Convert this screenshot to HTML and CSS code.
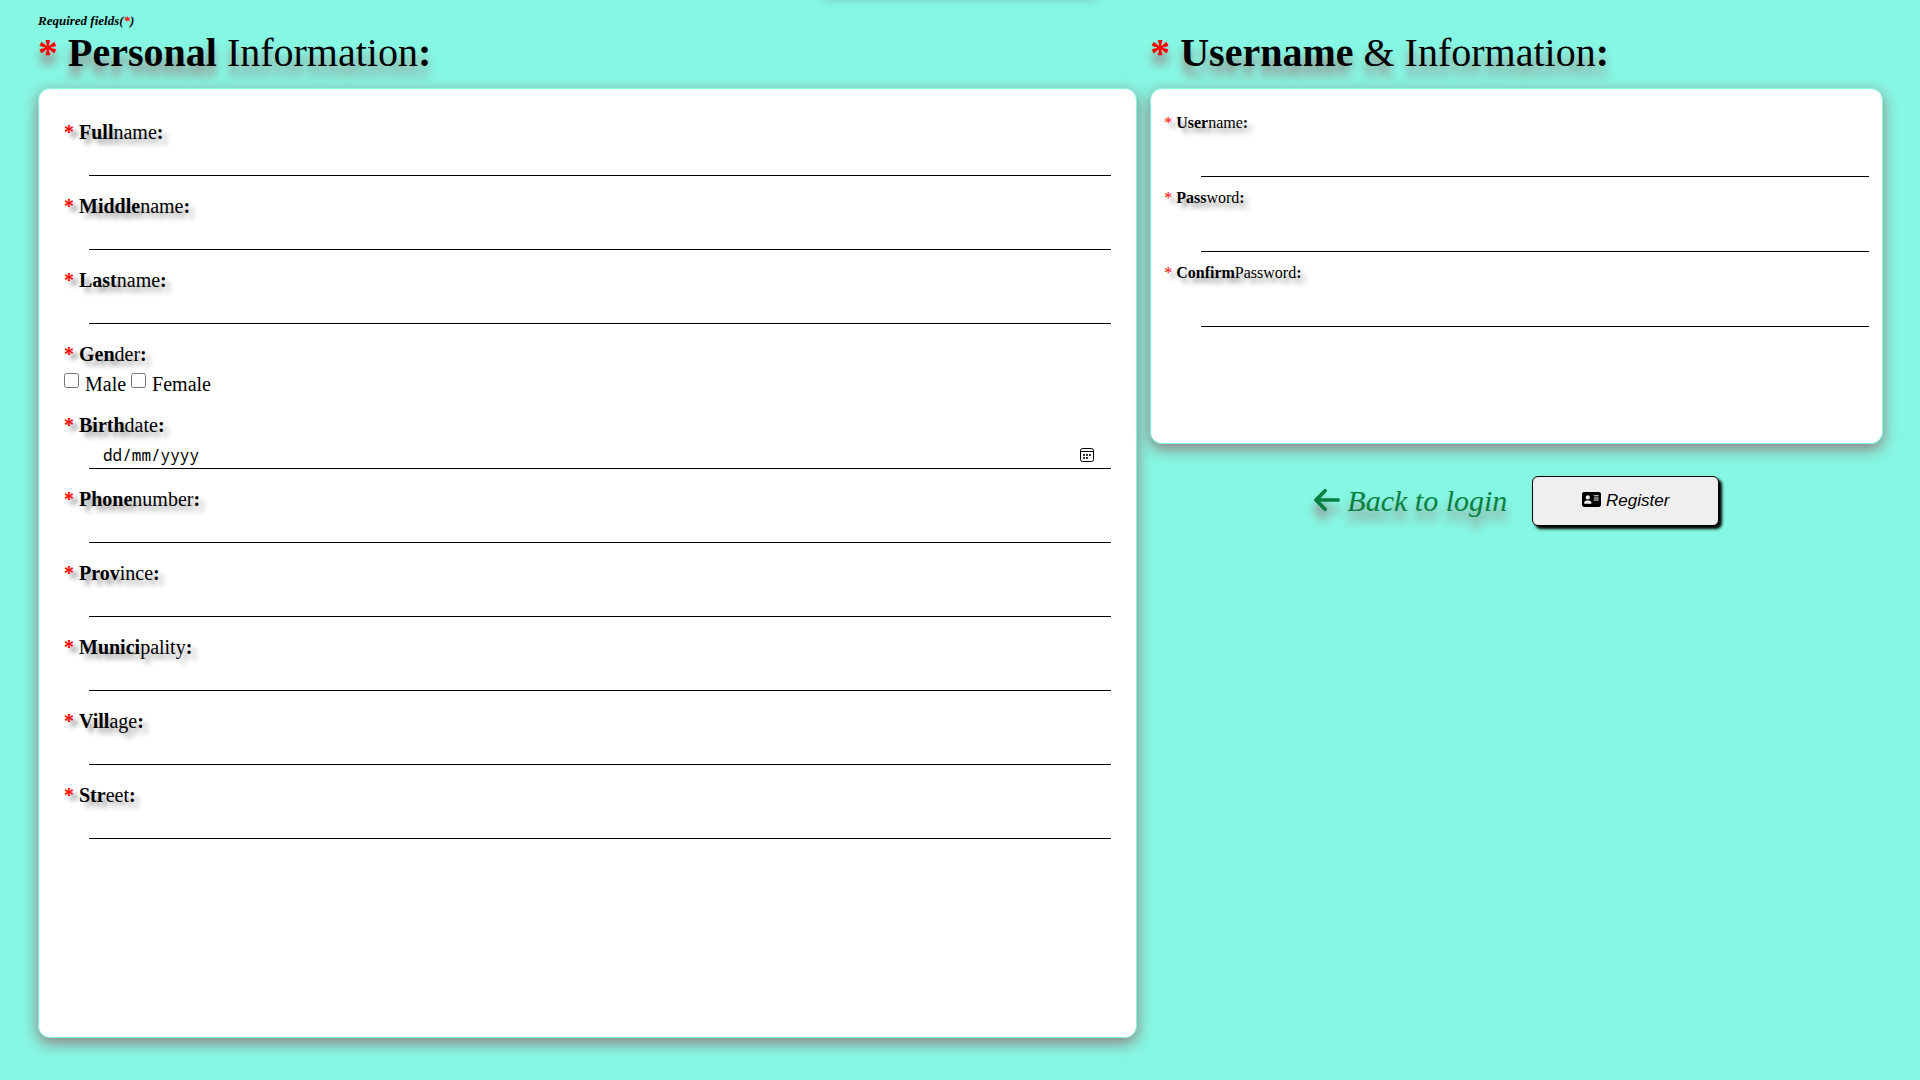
FILE: index.html
```
<!DOCTYPE html>
<html lang="en">
<head>
<meta charset="utf-8">
<title>Register</title>
<meta name="viewport" content="width=device-width, initial-scale=1">
<link rel="stylesheet" href="styles.css">
</head>
<body>
<div class="top-shade" aria-hidden="true"></div>
<form class="page">
  <p class="note">Required fields(<span class="star">*</span>)</p>
  <div class="columns">
    <section class="column">
      <h1 class="title"><b class="star">*</b> <b>Personal</b> Information<b>:</b></h1>
      <div class="card card-personal">
        <div class="field"><label for="fullname"><b class="star">*</b> <b>Full</b>name<b>:</b></label><input id="fullname" type="text"></div>
        <div class="field"><label for="middlename"><b class="star">*</b> <b>Middle</b>name<b>:</b></label><input id="middlename" type="text"></div>
        <div class="field"><label for="lastname"><b class="star">*</b> <b>Last</b>name<b>:</b></label><input id="lastname" type="text"></div>
        <fieldset class="field">
          <legend><b class="star">*</b> <b>Gen</b>der<b>:</b></legend>
          <div class="choices">
            <input id="male" type="checkbox"><label for="male">Male</label>
            <input id="female" type="checkbox"><label for="female">Female</label>
          </div>
        </fieldset>
        <div class="field">
          <label for="birthdate"><b class="star">*</b> <b>Birth</b>date<b>:</b></label>
          <div class="date">
            <input id="birthdate" type="text" placeholder="dd/mm/yyyy">
            <button type="button" class="picker" aria-label="Open calendar">
              <svg width="14" height="14" viewBox="0 0 14 14"><rect x=".5" y=".5" width="13" height="13" rx="2" fill="none" stroke="#000"/><path d="M0 3.5h14" stroke="#000"/><path d="M3 6h2v2H3zM6 6h2v2H6zM9 6h2v2H9zM3 9h2v2H3zM6 9h2v2H6z" fill="#333"/></svg>
            </button>
          </div>
        </div>
        <div class="field"><label for="phone"><b class="star">*</b> <b>Phone</b>number<b>:</b></label><input id="phone" type="tel"></div>
        <div class="field"><label for="province"><b class="star">*</b> <b>Prov</b>ince<b>:</b></label><input id="province" type="text"></div>
        <div class="field"><label for="municipality"><b class="star">*</b> <b>Munici</b>pality<b>:</b></label><input id="municipality" type="text"></div>
        <div class="field"><label for="village"><b class="star">*</b> <b>Vill</b>age<b>:</b></label><input id="village" type="text"></div>
        <div class="field"><label for="street"><b class="star">*</b> <b>Str</b>eet<b>:</b></label><input id="street" type="text"></div>
      </div>
    </section>
    <section class="column">
      <h1 class="title"><b class="star">*</b> <b>Username</b> &amp; Information<b>:</b></h1>
      <div class="card card-account">
        <div class="field"><label for="username"><span class="star">*</span> <b>User</b>name<b>:</b></label><input id="username" type="text"></div>
        <div class="field"><label for="password"><span class="star">*</span> <b>Pass</b>word<b>:</b></label><input id="password" type="password"></div>
        <div class="field"><label for="confirm"><span class="star">*</span> <b>Confirm</b>Password<b>:</b></label><input id="confirm" type="password"></div>
      </div>
      <div class="actions">
        <a class="back" href="#login"><svg class="arrow" viewBox="0 0 448 512" aria-hidden="true"><path fill="currentColor" d="M9.400 233.400c-12.500 12.500-12.500 32.800 0 45.300l160 160c12.500 12.500 32.800 12.500 45.300 0s12.500-32.800 0-45.300L109.200 288H416c17.700 0 32-14.300 32-32s-14.300-32-32-32H109.300L214.600 118.600c12.500-12.500 12.500-32.800 0-45.300s-32.800-12.500-45.300 0l-160 160z"/></svg> Back to login</a>
        <button class="register" type="submit"><svg class="id-card" viewBox="0 0 576 512" aria-hidden="true"><path fill="currentColor" d="M64 32C28.700 32 0 60.700 0 96v320c0 35.300 28.700 64 64 64h448c35.300 0 64-28.700 64-64V96c0-35.300-28.700-64-64-64H64zm80 256h64c44.200 0 80 35.800 80 80 0 8.800-7.200 16-16 16H80c-8.800 0-16-7.200-16-16 0-44.200 35.800-80 80-80zm-32-96a64 64 0 1 1 128 0 64 64 0 1 1-128 0zm256-64h128c8.800 0 16 7.200 16 16s-7.200 16-16 16H368c-8.800 0-16-7.200-16-16s7.200-16 16-16zm0 64h128c8.800 0 16 7.200 16 16s-7.200 16-16 16H368c-8.800 0-16-7.200-16-16s7.200-16 16-16zm0 64h128c8.800 0 16 7.200 16 16s-7.200 16-16 16H368c-8.800 0-16-7.200-16-16s7.200-16 16-16z"/></svg> Register</button>
      </div>
    </section>
  </div>
</form>
</body>
</html>
```
FILE: styles.css
```
* { box-sizing: border-box; }

body {
  margin: 0;
  background: #86f7e3;
  color: #000;
  font-family: "Liberation Serif", "Times New Roman", serif;
}

.page { padding: 13px 37px 32px 38px; }

.top-shade {
  position: absolute;
  top: -20px;
  left: calc(50% - 140px);
  width: 280px;
  height: 16px;
  border-radius: 8px;
  box-shadow: 0 2px 12px rgba(60, 60, 60, 0.3);
}

.note {
  margin: 0;
  font-size: 13px;
  line-height: 15px;
  font-weight: bold;
  font-style: italic;
}

.star { color: #f00; }

.columns {
  display: grid;
  grid-template-columns: 3fr 2fr;
  gap: 13px;
  align-items: start;
}

.title {
  margin: 0 0 10px;
  font-size: 40px;
  line-height: 50px;
  font-weight: normal;
  text-shadow: 0 10px 10px #978686;
}

.card {
  display: flex;
  flex-direction: column;
  background: #fff;
  border: 1px solid #86f7e3;
  border-radius: 12px;
  box-shadow: 0 5px 15px #907c7c;
}

.card-personal {
  min-height: 88vh;
  padding: 31px 25px;
  gap: 18px;
  font-size: 20px;
  line-height: 24px;
}

.card-account {
  min-height: 33vh;
  padding: 24px 13px;
  gap: 11px;
  font-size: 16px;
  line-height: 20px;
}

.field {
  display: flex;
  flex-direction: column;
  align-items: flex-start;
  margin: 0;
  padding: 0;
  border: 0;
}

.field > label,
.field > legend {
  padding: 0;
  text-shadow: 5px 5px 5px #999;
}

.field > input,
.date {
  align-self: stretch;
  height: 32px;
  margin: 0 0 0 25px;
  padding: 0 12px;
  border: 0;
  border-bottom: 1px solid #000;
  border-radius: 0;
  background: none;
  outline: 0;
  font-size: 16px;
}

.card-account .field > input {
  height: 44px;
  margin-left: 37px;
}

.choices {
  display: flex;
  align-items: center;
  height: 29px;
  padding-top: 6px;
}

.choices input {
  width: 15px;
  height: 15px;
  margin: 0 6px 6px 0;
}

.choices label { margin-right: 5px; }

.date {
  display: flex;
  align-items: center;
  padding: 4px 17px 0 14px;
}

.date input {
  flex: 1;
  padding: 0;
  border: 0;
  outline: 0;
  background: none;
  font: 16px/24px "Noto Sans Mono", "Liberation Mono", monospace;
}

.date input::placeholder { color: #000; }

.picker {
  display: flex;
  padding: 0;
  border: 0;
  background: none;
}

.actions {
  display: flex;
  justify-content: center;
  align-items: center;
  gap: 25px;
  margin-top: 32px;
}

.back {
  color: #088040;
  font-size: 30px;
  line-height: 36px;
  font-style: italic;
  text-decoration: none;
  text-shadow: 0 10px 10px #978686;
}

.arrow {
  width: 26px;
  height: 30px;
  vertical-align: -4px;
  overflow: visible;
  filter: drop-shadow(0 10px 5px #978686);
}

.register {
  width: 187px;
  height: 50px;
  padding: 0;
  border: 1px solid #000;
  border-radius: 6px;
  background: #efefef;
  box-shadow: 3px 3px 3px #000;
  color: #000;
  font: italic 17px "Liberation Sans", Arial, sans-serif;
}

.id-card {
  width: 19px;
  height: 17px;
  vertical-align: -2px;
}
```
